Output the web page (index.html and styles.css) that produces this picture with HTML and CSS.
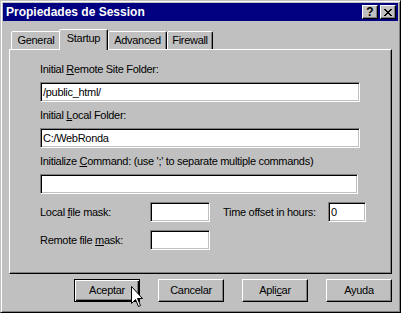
FILE: index.html
```html
<!DOCTYPE html>
<html lang="es">
<head>
  <meta charset="UTF-8" />
  <title>Propiedades de Session</title>
  <link rel="stylesheet" href="styles.css">
</head>
<body>
  <div class="window">
    <!-- Title bar -->
    <div class="titlebar">
      <span class="title">Propiedades de Session</span>
      <div class="caption-btns">
        <span class="cap-btn help">?</span>
        <span class="cap-btn close">
          <svg width="8" height="7" viewBox="0 0 8 7">
            <path d="M0 0h2v1h1v1h2v-1h1v-1h2v1h-1v1h-1v1h-1v1h1v1h1v1h1v1h-2v-1h-1v-1h-2v1h-1v1h-2v-1h1v-1h1v-1h1v-1h-1v-1h-1v-1h-1z" fill="#000"/>
          </svg>
        </span>
      </div>
    </div>

    <!-- Tabs -->
    <div class="tabs">
      <div class="tab tab-general">General</div>
      <div class="tab tab-startup active">Startup</div>
      <div class="tab tab-advanced">Advanced</div>
      <div class="tab tab-firewall">Firewall</div>
    </div>

    <!-- Tab page -->
    <div class="panel">
      <div class="label">Initial <u>R</u>emote Site Folder:</div>
      <div class="input wide">/public_html/</div>

      <div class="label">Initial <u>L</u>ocal Folder:</div>
      <div class="input wide">C:/WebRonda</div>

      <div class="label">Initialize <u>C</u>ommand: (use ';' to separate multiple commands)</div>
      <div class="input wide cmd"></div>

      <div class="mask-row">
        <span class="mask-label">Local <u>f</u>ile mask:</span>
        <div class="input mask-input"></div>
        <span class="time-label">Time offset in hours:</span>
        <div class="input time-input">0</div>
      </div>
      <div class="mask-row">
        <span class="mask-label">Remote file <u>m</u>ask:</span>
        <div class="input mask-input"></div>
      </div>
    </div>

    <!-- Dialog buttons -->
    <div class="buttons">
      <div class="btn default">Aceptar</div>
      <div class="btn">Cancelar</div>
      <div class="btn">Apli<u>c</u>ar</div>
      <div class="btn">Ayuda</div>
    </div>

    <!-- Mouse pointer over the default button -->
    <svg class="cursor" width="13" height="22" viewBox="0 0 13 22">
      <path d="M0.5 0.5V17.5L4.5 13.5L7.5 20.5L9.5 19.5L6.5 12.5H11.5Z" fill="#fff" stroke="#000" stroke-width="1"/>
    </svg>
  </div>
</body>
</html>
```

FILE: styles.css
```css
/* Base reset */
* {
  box-sizing: border-box;
  margin: 0;
  padding: 0;
}

body {
  font-family: "Liberation Sans", Arial, sans-serif;
  font-size: 11px;
  letter-spacing: -0.3px;
  color: #000;
  background: #c0c0c0;
}

u {
  text-decoration: underline;
  text-underline-offset: 1px;
}

/* Outer window frame */
.window {
  position: relative;
  display: flex;
  flex-direction: column;
  width: 401px;
  height: 313px;
  padding: 2px;
  background: #c0c0c0;
  border: 1px solid;
  border-color: #c0c0c0 #000 #000 #c0c0c0;
  box-shadow: inset 1px 1px #fff, inset -1px -1px #808080;
}

/* Title bar */
.titlebar {
  display: flex;
  align-items: center;
  justify-content: space-between;
  height: 18px;
  padding: 0 2px 0 3px;
  background: #000080;
  color: #fff;
}

.title {
  font-size: 12px;
  font-weight: bold;
  letter-spacing: 0;
  line-height: 18px;
}

.caption-btns {
  display: flex;
  gap: 2px;
}

.cap-btn {
  display: flex;
  align-items: center;
  justify-content: center;
  width: 16px;
  height: 14px;
  background: #c0c0c0;
  color: #000;
  border: 1px solid;
  border-color: #fff #000 #000 #fff;
  box-shadow: inset -1px -1px #808080;
}

.cap-btn.help {
  font-size: 12px;
  font-weight: bold;
  letter-spacing: 0;
  line-height: 12px;
}

/* Tab strip */
.tabs {
  position: relative;
  z-index: 1;
  display: flex;
  align-items: flex-end;
  height: 20px;
  margin: 8px 0 0 8px;
}

.tab {
  height: 18px;
  line-height: 16px;
  text-align: center;
  background: #c0c0c0;
  border: 1px solid;
  border-bottom: none;
  border-color: #fff #000 transparent #fff;
  border-radius: 2px 2px 0 0;
  box-shadow: inset -1px 0 #808080;
}

.tab-general { width: 50px; }
.tab-startup { width: 49px; margin-left: -2px; }
.tab-advanced { width: 59px; }
.tab-firewall { width: 46px; }

.tab.active {
  position: relative;
  height: 21px;
  margin-bottom: -1px;
}

/* Tab page */
.panel {
  height: 225px;
  margin: 0 6px;
  padding: 13px 0 0 30px;
  border: 1px solid;
  border-color: #fff #000 #000 #fff;
  box-shadow: inset -1px -1px #808080;
}

.label {
  height: 13px;
  line-height: 13px;
  margin-bottom: 6px;
  white-space: nowrap;
}

/* Sunken edit box */
.input {
  height: 20px;
  padding: 0 2px;
  line-height: 18px;
  background: #fff;
  border: 1px solid;
  border-color: #808080 #fff #fff #808080;
  box-shadow: inset 1px 1px #000, inset -1px -1px #c0c0c0;
  white-space: nowrap;
}

.input.wide {
  width: 320px;
  margin-bottom: 7px;
}

.input.cmd {
  width: 318px;
  margin-bottom: 8px;
}

.mask-row {
  display: flex;
  align-items: center;
  height: 20px;
  margin-bottom: 8px;
}

.mask-label { width: 110px; }
.mask-input { width: 60px; }

.time-label {
  width: 105px;
  margin-left: 13px;
}

.time-input { width: 38px; }

/* Bottom buttons */
.buttons {
  display: flex;
  justify-content: flex-end;
  gap: 18px;
  margin: 5px 6px 0 0;
}

.btn {
  width: 66px;
  height: 23px;
  line-height: 21px;
  text-align: center;
  border: 1px solid;
  border-color: #fff #000 #000 #fff;
  box-shadow: inset -1px -1px #808080;
}

.btn.default {
  border-color: #000;
  box-shadow: inset 1px 1px #fff, inset -1px -1px #000, inset -2px -2px #808080;
}

/* Pointer drawn over the dialog */
.cursor {
  position: absolute;
  left: 130px;
  top: 285px;
}
```
